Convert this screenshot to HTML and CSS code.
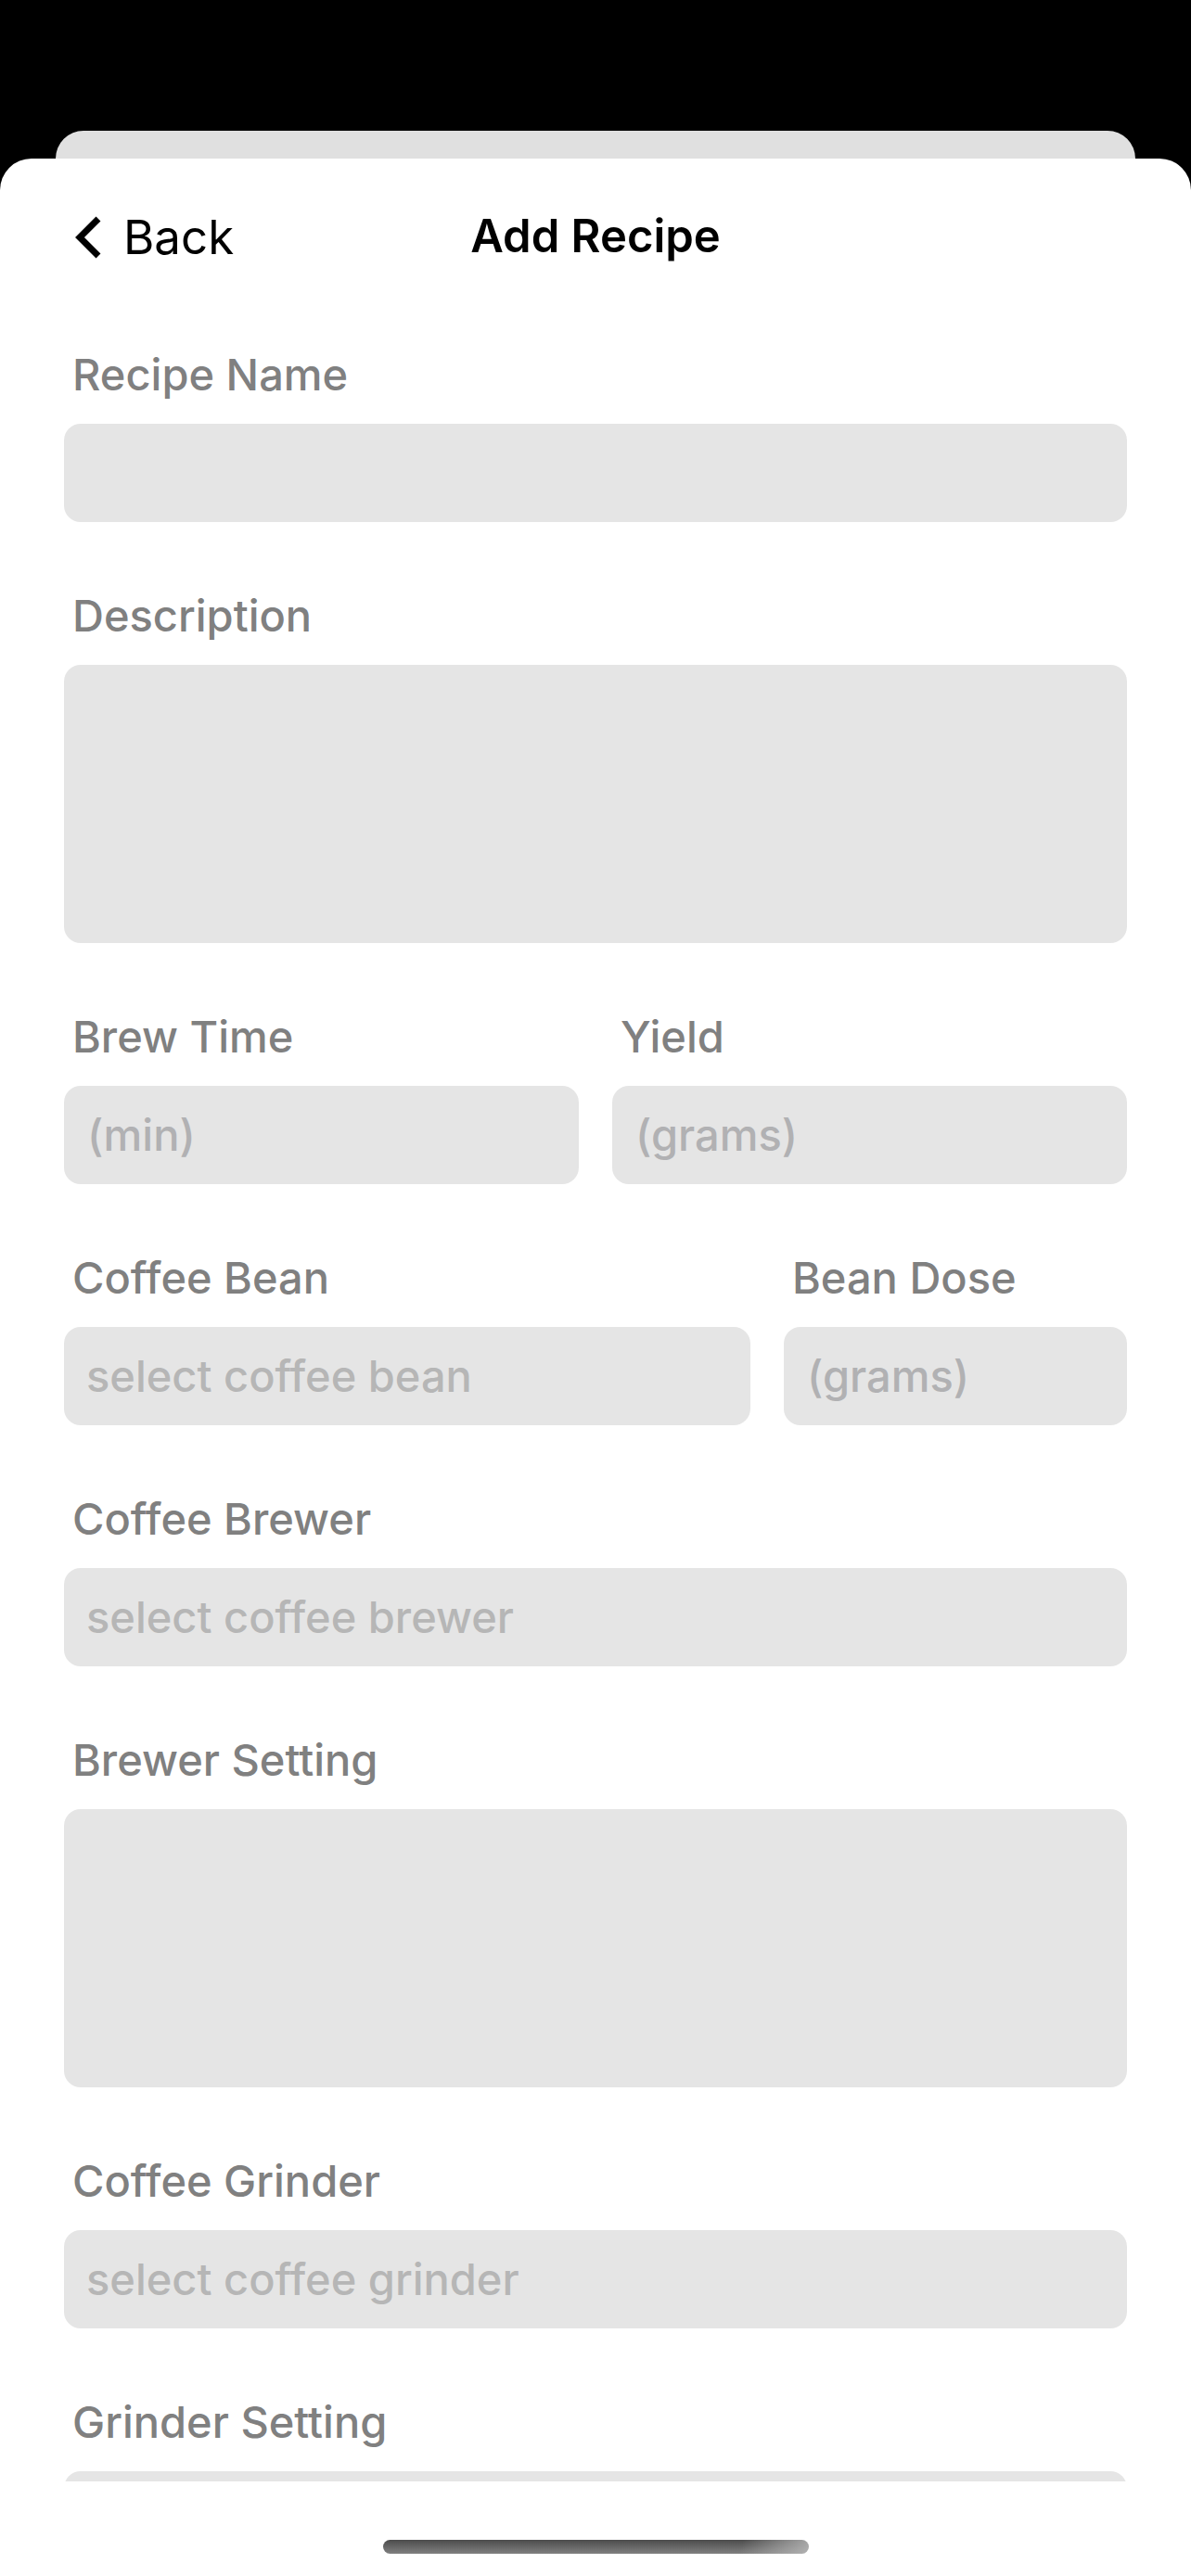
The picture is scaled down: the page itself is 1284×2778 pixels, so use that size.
FILE: index.html
```html
<!DOCTYPE html>
<html lang="en">
<head>
  <meta charset="utf-8">
  <meta name="viewport" content="width=device-width, initial-scale=1">
  <title>Add Recipe</title>
  <link rel="stylesheet" href="styles.css">
</head>
<body>
  <div class="sheet-behind"></div>
  <main class="sheet">
    <header class="nav">
      <button class="back" type="button">
        <svg class="back-icon" viewBox="0 0 28 46" aria-hidden="true">
          <path d="M25 3 L5 23 L25 43" fill="none" stroke="currentColor" stroke-width="7"/>
        </svg>
        Back
      </button>
      <h1 class="title">Add Recipe</h1>
    </header>
    <form class="form">
      <div class="field">
        <label class="label" for="name">Recipe Name</label>
        <input class="control" id="name" type="text">
      </div>
      <div class="field">
        <label class="label" for="description">Description</label>
        <textarea class="control control-tall" id="description"></textarea>
      </div>
      <div class="row">
        <div class="field">
          <label class="label" for="time">Brew Time</label>
          <input class="control" id="time" type="text" placeholder="(min)">
        </div>
        <div class="field">
          <label class="label" for="yield">Yield</label>
          <input class="control" id="yield" type="text" placeholder="(grams)">
        </div>
      </div>
      <div class="row row-wide-first">
        <div class="field">
          <label class="label" for="bean">Coffee Bean</label>
          <select class="control" id="bean"><option>select coffee bean</option></select>
        </div>
        <div class="field">
          <label class="label" for="dose">Bean Dose</label>
          <input class="control" id="dose" type="text" placeholder="(grams)">
        </div>
      </div>
      <div class="field">
        <label class="label" for="brewer">Coffee Brewer</label>
        <select class="control" id="brewer"><option>select coffee brewer</option></select>
      </div>
      <div class="field">
        <label class="label" for="brewer-setting">Brewer Setting</label>
        <textarea class="control control-tall" id="brewer-setting"></textarea>
      </div>
      <div class="field">
        <label class="label" for="grinder">Coffee Grinder</label>
        <select class="control" id="grinder"><option>select coffee grinder</option></select>
      </div>
      <div class="field">
        <label class="label" for="grinder-setting">Grinder Setting</label>
        <textarea class="control control-tall" id="grinder-setting"></textarea>
      </div>
    </form>
    <footer class="home-area"><div class="home-indicator"></div></footer>
  </main>
</body>
</html>
```
FILE: styles.css
```css
* {
  box-sizing: border-box;
}

body {
  margin: 0;
  height: 100vh;
  padding-top: 141px;
  display: flex;
  flex-direction: column;
  background: #000;
  color: #000;
  font-family: Inter, "Liberation Sans", sans-serif;
}

.sheet-behind {
  flex: none;
  height: 30px;
  margin: 0 60px;
  border-radius: 30px 30px 0 0;
  background: #e0e0e0;
}

.sheet {
  flex: 1;
  min-height: 0;
  display: flex;
  flex-direction: column;
  border-radius: 34px 34px 0 0;
  background: #fff;
}

.nav {
  flex: none;
  display: grid;
  grid-template-columns: 1fr auto 1fr;
  align-items: center;
  height: 168px;
  padding: 0 81px;
}

.back {
  justify-self: start;
  display: flex;
  align-items: center;
  gap: 24px;
  padding: 2px 0 0;
  border: 0;
  background: none;
  color: inherit;
  font: 400 51px/64px Inter, "Liberation Sans", sans-serif;
}

.back-icon {
  width: 28px;
  height: 46px;
}

.title {
  margin: 0;
  font-size: 49px;
  font-weight: 600;
  line-height: 64px;
}

.form {
  flex: 1;
  min-height: 0;
  display: flex;
  flex-direction: column;
  gap: 72px;
  padding: 36px 69px;
  overflow-y: auto;
  scrollbar-width: none;
}

.row {
  display: grid;
  grid-template-columns: 1fr 1fr;
  gap: 36px;
}

.row-wide-first {
  grid-template-columns: 2fr 1fr;
}

.field {
  min-width: 0;
  display: flex;
  flex-direction: column;
  gap: 24px;
}

.label {
  padding-left: 9px;
  color: #808080;
  font-size: 47px;
  font-weight: 460;
  font-variant-ligatures: none;
  line-height: 58px;
}

.control {
  display: block;
  width: 100%;
  height: 106px;
  margin: 0;
  padding: 0 25px 2px;
  border: 0;
  border-radius: 18px;
  background: #e5e5e5;
  color: #000;
  font-family: inherit;
  font-size: 47px;
  font-weight: 460;
  font-variant-ligatures: none;
  appearance: none;
  resize: none;
}

.control::placeholder {
  color: #b1b1b3;
  opacity: 1;
}

select.control {
  padding-left: 24px;
  color: #b6b6b6;
}

.control-tall {
  height: 300px;
  padding: 24px;
}

.home-area {
  flex: none;
  height: 102px;
  padding-bottom: 24px;
  display: flex;
  align-items: flex-end;
  justify-content: center;
}

.home-indicator {
  width: 459px;
  height: 15px;
  border-radius: 8px;
  background:
    linear-gradient(100deg, transparent 84%, rgba(190, 190, 190, 0.8)),
    linear-gradient(#4c4c4c, #808080);
}
```
